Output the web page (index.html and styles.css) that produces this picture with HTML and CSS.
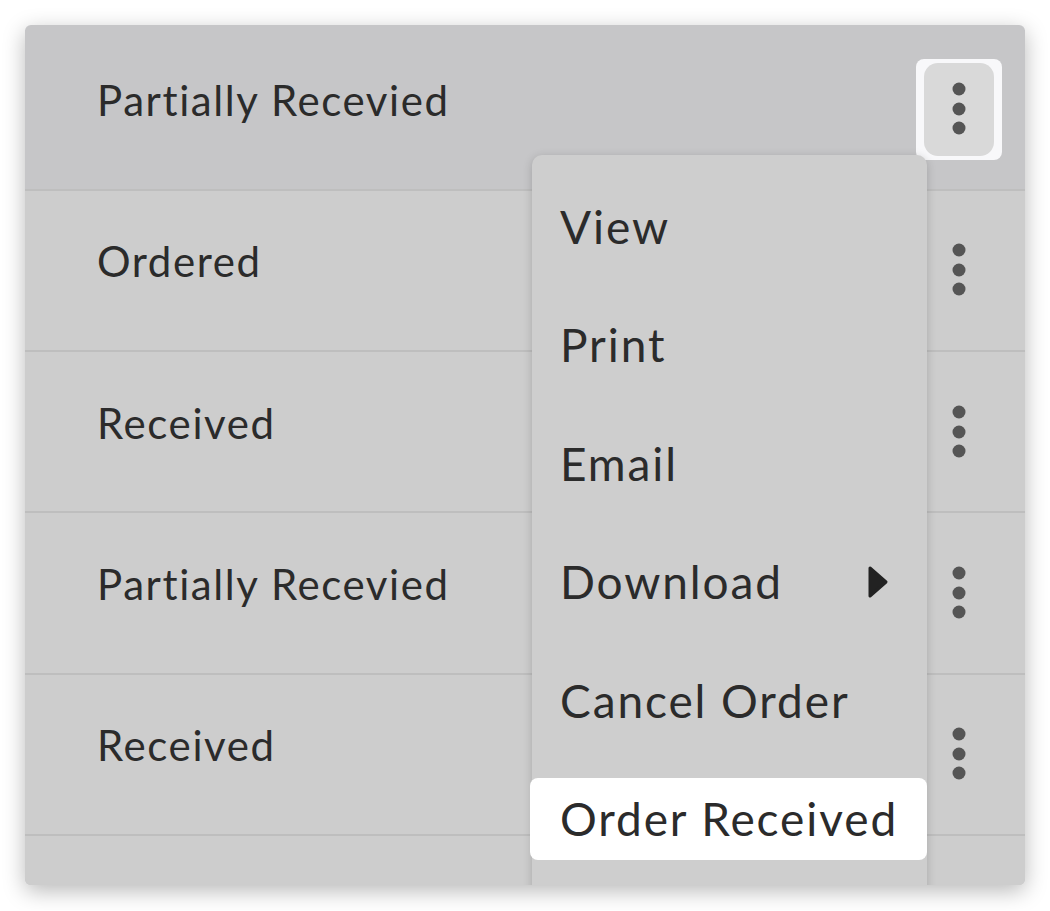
FILE: index.html
```html
<!DOCTYPE html>
<html>
<head>
  <title>Purchase Orders</title>
  <link rel="stylesheet" href="styles.css">
</head>
<body>
  <div class="card">
    <div class="row row-active">
      <span class="status">Partially Recevied</span>
      <button class="kebab kebab-open" aria-label="More actions">
        <span class="dots">
          <svg width="14" height="54" viewBox="0 0 14 54"><circle cx="7" cy="7" r="6.5"/><circle cx="7" cy="27" r="6.5"/><circle cx="7" cy="46" r="6.5"/></svg>
        </span>
      </button>
    </div>
    <div class="row">
      <span class="status">Ordered</span>
      <button class="kebab" aria-label="More actions">
        <span class="dots">
          <svg width="14" height="54" viewBox="0 0 14 54"><circle cx="7" cy="7" r="6.5"/><circle cx="7" cy="27" r="6.5"/><circle cx="7" cy="46" r="6.5"/></svg>
        </span>
      </button>
    </div>
    <div class="row">
      <span class="status">Received</span>
      <button class="kebab" aria-label="More actions">
        <span class="dots">
          <svg width="14" height="54" viewBox="0 0 14 54"><circle cx="7" cy="7" r="6.5"/><circle cx="7" cy="27" r="6.5"/><circle cx="7" cy="46" r="6.5"/></svg>
        </span>
      </button>
    </div>
    <div class="row">
      <span class="status">Partially Recevied</span>
      <button class="kebab" aria-label="More actions">
        <span class="dots">
          <svg width="14" height="54" viewBox="0 0 14 54"><circle cx="7" cy="7" r="6.5"/><circle cx="7" cy="27" r="6.5"/><circle cx="7" cy="46" r="6.5"/></svg>
        </span>
      </button>
    </div>
    <div class="row">
      <span class="status">Received</span>
      <button class="kebab" aria-label="More actions">
        <span class="dots">
          <svg width="14" height="54" viewBox="0 0 14 54"><circle cx="7" cy="7" r="6.5"/><circle cx="7" cy="27" r="6.5"/><circle cx="7" cy="46" r="6.5"/></svg>
        </span>
      </button>
    </div>
    <div class="row"></div>

    <ul class="menu">
      <li>View</li>
      <li>Print</li>
      <li>Email</li>
      <li>Download
        <svg class="caret" width="22" height="34" viewBox="0 0 22 34"><path d="M3 3 L19 17 L3 31 Z"/></svg>
      </li>
      <li>Cancel Order</li>
      <li class="selected">Order Received</li>
    </ul>
  </div>
</body>
</html>
```

FILE: styles.css
```css
body {
  margin: 0;
  background: #fff;
  font-family: Lato, "Open Sans", sans-serif;
  color: #2b2b2b;
}
.card {
  position: relative;
  margin: 25px;
  width: 1000px;
  height: 860px;
  padding-top: 4.5px;
  box-sizing: border-box;
  overflow: hidden;
  border-radius: 6px;
  background: #c6c6c8;
  box-shadow: 0 6px 22px rgba(0,0,0,0.28);
}
.row {
  display: flex;
  align-items: center;
  justify-content: space-between;
  height: 161.25px;
  box-sizing: border-box;
  padding: 0 23px 0 72px;
  border-bottom: 2px solid #bebebe;
  background: #cdcdcd;
}
.row-active {
  background: #c6c6c8;
}
.row:last-of-type {
  border-bottom: 0;
}
.status {
  font-size: 42px;
  letter-spacing: 1.6px;
  padding-bottom: 18px;
}
.kebab {
  display: flex;
  width: 86px;
  height: 101px;
  padding: 4px 8px;
  box-sizing: border-box;
  border: 0;
  border-radius: 8px;
  background: transparent;
}
.dots {
  display: flex;
  flex: 1;
  align-items: center;
  justify-content: center;
  border-radius: 14px;
}
.dots svg {
  fill: #555;
}
.kebab-open {
  background: #f8f8fa;
}
.kebab-open .dots {
  background: #d9d9d9;
}

/* action dropdown for the open row */
.menu {
  position: absolute;
  left: 507px;
  top: 130px;
  width: 395px;
  margin: 0;
  padding: 30px 0 60px;
  list-style: none;
  border-radius: 10px;
  background: #cecece;
  box-shadow: 0 2px 10px rgba(0,0,0,0.18);
}
.menu li {
  display: flex;
  align-items: center;
  justify-content: space-between;
  height: 82px;
  margin-bottom: 36.5px;
  padding: 0 38px 0 28px;
  font-size: 46px;
  letter-spacing: 1.9px;
  white-space: nowrap;
  border-radius: 8px;
}
.menu li.selected {
  background: #fff;
  margin-left: -2px;
  padding: 0 10px 0 30px;
}
.caret {
  fill: #222;
  stroke: #222;
  stroke-width: 3;
  stroke-linejoin: round;
}
```
